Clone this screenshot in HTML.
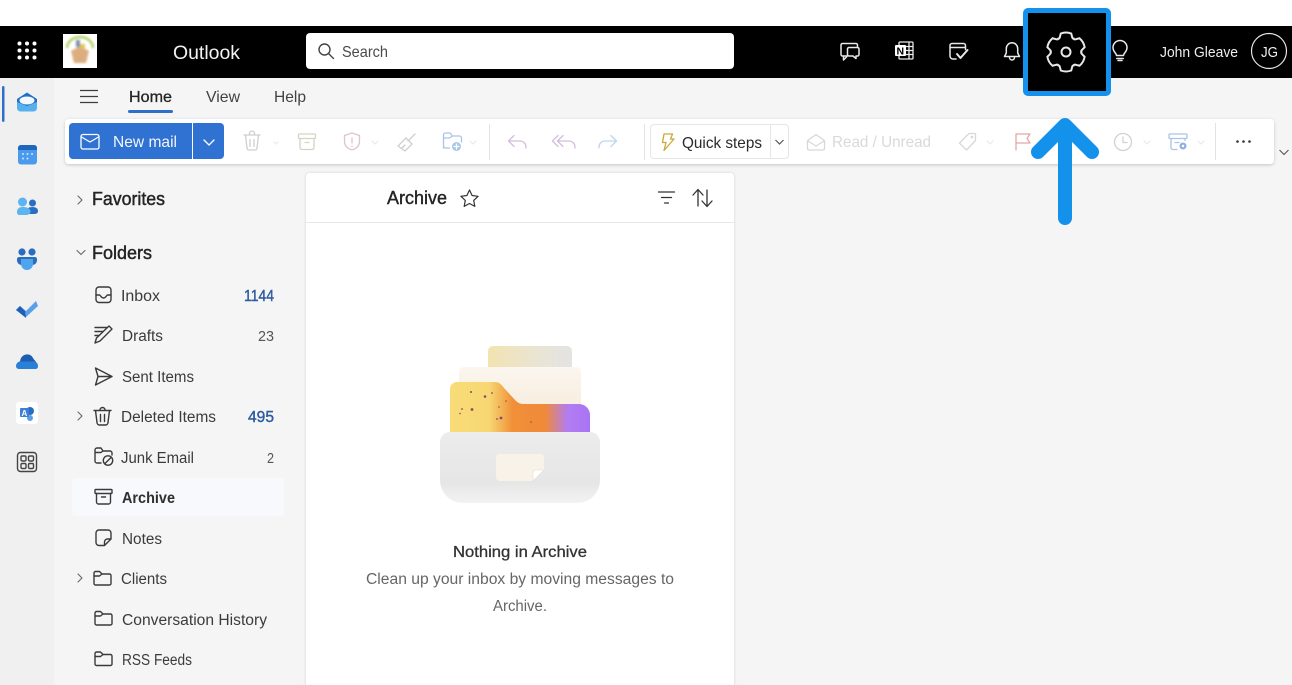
<!DOCTYPE html>
<html lang="en">
<head>
<meta charset="utf-8">
<title>Outlook</title>
<style>
html,body{margin:0;padding:0;width:1292px;height:685px;overflow:hidden;background:#fff}
svg{display:block;font-family:"Liberation Sans",sans-serif;filter:blur(.3px)}
.ln{fill:none;stroke:#3a3a3a;stroke-width:1.4;stroke-linecap:round;stroke-linejoin:round}
.nav{font-size:15.5px;fill:#3b3b3b}
.head{font-size:18px;fill:#242424;stroke:#242424;stroke-width:.45}
.cnt{font-size:15px;fill:#555}
.blue{font-size:15.5px;fill:#2c5c9f;stroke:#2c5c9f;stroke-width:.4}
</style>
</head>
<body>
<svg width="1292" height="685" viewBox="0 0 1292 685" xmlns="http://www.w3.org/2000/svg">
<defs>
<filter id="sh" x="-2%" y="-20%" width="104%" height="150%"><feDropShadow dx="0" dy="1" stdDeviation="1.5" flood-color="#000" flood-opacity=".2"/></filter>
<filter id="sh2" x="-5%" y="-5%" width="110%" height="110%"><feDropShadow dx="0" dy="0" stdDeviation="1.2" flood-color="#000" flood-opacity=".16"/></filter>
<filter id="blur1"><feGaussianBlur stdDeviation="1"/></filter>
<linearGradient id="fold" x1="0" x2="1" y1="0" y2="0"><stop offset="0" stop-color="#f8dc78"/><stop offset=".28" stop-color="#f7d772"/><stop offset=".45" stop-color="#f18f38"/><stop offset=".68" stop-color="#f08a3a"/><stop offset=".84" stop-color="#b27cf2"/><stop offset="1" stop-color="#a974f2"/></linearGradient>
<linearGradient id="tab" x1="0" x2="1" y1="0" y2="0"><stop offset="0" stop-color="#f3e3b2"/><stop offset=".6" stop-color="#e9e4d4"/><stop offset="1" stop-color="#e3e3e3"/></linearGradient>
<linearGradient id="paper" x1="0" x2="0" y1="0" y2="1"><stop offset="0" stop-color="#fbf6ef"/><stop offset="1" stop-color="#f6ead9"/></linearGradient>
<linearGradient id="drawer" x1="0" x2="0" y1="0" y2="1"><stop offset="0" stop-color="#ececec"/><stop offset=".72" stop-color="#e6e6e6"/><stop offset="1" stop-color="#f3f3f3"/></linearGradient>
<path id="gs" d="M-7.750-13.400Q-6.500-13-6-15.500L-5.200-18.500Q0-20.500 5.200-18.500L6-15.500Q6.500-13 7.750-13.400"/>
<g id="fld"><path d="M1 2.500a1.500 1.500 0 0 1 1.500-1.500h4l2.500 2.500h7.500a1.500 1.500 0 0 1 1.500 1.500v8a1.500 1.500 0 0 1-1.500 1.500H2.500A1.500 1.500 0 0 1 1 13z"/><path d="M1 5.500h5.500L9 3.500"/></g>
</defs>

<!-- backgrounds -->
<rect width="1292" height="685" fill="#f5f5f5"/>
<rect y="78" width="54" height="607" fill="#f0f0f0"/>
<rect width="1292" height="26" fill="#fff"/>
<rect y="26" width="1292" height="52" fill="#000"/>

<!-- header -->
<g fill="#fff">
<circle cx="19.500" cy="43.500" r="2"/><circle cx="27" cy="43.500" r="2"/><circle cx="34.500" cy="43.500" r="2"/>
<circle cx="19.500" cy="50.500" r="2"/><circle cx="27" cy="50.500" r="2"/><circle cx="34.500" cy="50.500" r="2"/>
<circle cx="19.500" cy="57.500" r="2"/><circle cx="27" cy="57.500" r="2"/><circle cx="34.500" cy="57.500" r="2"/>
</g>
<rect x="63" y="34" width="34" height="34" fill="#fff"/>
<g filter="url(#blur1)">
<path d="M67 48a13 11 0 0 1 26 0" fill="none" stroke="#b7cf6a" stroke-width="2.600"/>
<path d="M71 51l9-5 9 5-3 12h-12z" fill="#dcae7f"/>
<rect x="76" y="40" width="4" height="7" fill="#7691ad"/><rect x="80" y="44" width="5" height="4" fill="#e0c84f"/>
</g>
<text x="173" y="59" font-size="19" fill="#f3f3f3" textLength="67" lengthAdjust="spacingAndGlyphs">Outlook</text>
<rect x="306" y="33" width="428" height="36" rx="4" fill="#fff"/>
<g fill="none" stroke="#444" stroke-width="1.400" stroke-linecap="round"><circle cx="324.500" cy="49.500" r="5.500"/><path d="M328.500 53.500l5 5"/></g>
<text x="342" y="57" font-size="16" fill="#4a4a4a" textLength="46" lengthAdjust="spacingAndGlyphs">Search</text>

<g fill="none" stroke="#e9e9e9" stroke-width="1.500" stroke-linecap="round" stroke-linejoin="round">
<!-- chat -->
<path d="M847 56h-4.500a1.500 1.500 0 0 1-1.500-1.500V45a1.500 1.500 0 0 1 1.500-1.500H856a1.500 1.500 0 0 1 1.500 1.500v2"/>
<path d="M843.500 56v4l3.500-3.500"/>
<path d="M849 47.500h8.500a1.500 1.500 0 0 1 1.500 1.500v5.500a1.500 1.500 0 0 1-1.500 1.500H856v2.500l-3-2.500h-4a1.500 1.500 0 0 1-1.500-1.500V49a1.500 1.500 0 0 1 1.500-1.500z"/>
<!-- todo -->
<path d="M950 56V45.500a2 2 0 0 1 2-2h11.500a2 2 0 0 1 2 2v4M950 47.500h15.500M950 56a3 3 0 0 0 3 3h3"/>
<path d="M957 54l3.500 4 7-8" stroke-width="2"/>
<!-- bell -->
<path d="M1004.500 56.500h15l-1.800-3.500v-4.500a5.700 5.700 0 0 0-11.400 0V53z"/><path d="M1009.500 57.500a2.500 2.500 0 0 0 5 0"/>
<!-- bulb -->
<path d="M1116.500 55.500c0-2.500-3.500-3.500-3.500-8a7 7 0 0 1 14 0c0 4.500-3.500 5.500-3.500 8z"/><path d="M1116.800 58.500h6.400M1118 60.500h4"/>
</g>
<!-- onenote -->
<g fill="none" stroke="#e9e9e9" stroke-width="1.300"><rect x="899" y="42" width="14" height="17" rx="1"/><path d="M905 46.500h8M905 50.500h8M905 54.500h8M909 42v17"/></g>
<rect x="895" y="45" width="11" height="11" rx="1" fill="#fff"/>
<text x="896.500" y="54.500" font-size="10.500" font-weight="bold" fill="#000">N</text>

<text x="1160" y="57" font-size="14.500" fill="#eee" textLength="78" lengthAdjust="spacingAndGlyphs">John Gleave</text>
<circle cx="1269" cy="51" r="17.500" fill="none" stroke="#e6e6e6" stroke-width="1.200"/>
<text x="1261" y="57" font-size="15" fill="#eee" textLength="17" lengthAdjust="spacingAndGlyphs">JG</text>

<!-- tabs -->
<path d="M80 90.500h18M80 96.500h18M80 102.500h18" stroke="#3d3d3d" stroke-width="1.300" fill="none"/>
<text x="129" y="102" font-size="16" fill="#242424" stroke="#242424" stroke-width=".3" textLength="43" lengthAdjust="spacingAndGlyphs">Home</text>
<rect x="128" y="110" width="45" height="3" rx="1.500" fill="#2f6fc9"/>
<text x="206" y="102" font-size="16" fill="#424242" textLength="34" lengthAdjust="spacingAndGlyphs">View</text>
<text x="274" y="102" font-size="16" fill="#424242" textLength="32" lengthAdjust="spacingAndGlyphs">Help</text>

<!-- ribbon -->
<rect x="65" y="119" width="1209" height="45" rx="4" fill="#fff" filter="url(#sh)"/>
<path d="M69 127a4 4 0 0 1 4-4h119v36H73a4 4 0 0 1-4-4z" fill="#2f72d2"/>
<path d="M193 123h27a4 4 0 0 1 4 4v28a4 4 0 0 1-4 4h-27z" fill="#2f72d2"/>
<g fill="none" stroke="#fff" stroke-width="1.300" stroke-linejoin="round" stroke-linecap="round">
<rect x="81" y="134.500" width="18" height="14.500" rx="2"/><path d="M81.500 137l8.500 5 8.500-5"/>
<path d="M204 140l5 5 5-5"/>
</g>
<text x="113" y="147" font-size="16" fill="#f2f6fc" textLength="64" lengthAdjust="spacingAndGlyphs">New mail</text>

<g fill="none" stroke-width="1.300" stroke-linecap="round" stroke-linejoin="round">
<!-- trash -->
<g stroke="#cfcfcf"><path d="M244 135h16M249.500 135v-1.500a2.500 2.500 0 0 1 5 0V135M245.500 135l1.500 13a2 2 0 0 0 2 2h6a2 2 0 0 0 2-2l1.500-13M250 139.500v7M254 139.500v7"/>
<path d="M274 142l2 2 2-2" stroke="#eee"/></g>
<!-- archive -->
<g stroke="#d5d3c4"><rect x="298.500" y="134" width="17" height="4.500" rx="1"/><path d="M300 138.500v9a2 2 0 0 0 2 2h10a2 2 0 0 0 2-2v-9M305 142.500h4"/></g>
<!-- shield -->
<g stroke="#e2c3c7"><path d="M352 133l7.500 2.500v6c0 4-3 7-7.500 8.500-4.500-1.500-7.500-4.500-7.500-8.500v-6z"/><path d="M352 138v5M352 146v.5"/></g>
<path d="M372 141l3 3 3-3M470 141l3 3 3-3" stroke="#ececec"/>
<!-- broom -->
<g stroke="#cfcfcf"><path d="M415 134l-7 7M398 146l8-8 6 6-7 7z"/><path d="M402 148l3-3"/></g>
<!-- move -->
<g stroke="#a9c4e6"><path d="M443.500 148v-13a2 2 0 0 1 2-2h4.500l2.500 3h7a2 2 0 0 1 2 2v4M443.500 138h6l3-2M443.500 146a2 2 0 0 0 2 2h4"/></g>
<circle cx="456.500" cy="146.500" r="4.500" fill="#a9c4ec"/><path d="M454 146.500h5M456.500 144v5" stroke="#fff"/>
<!-- undo etc -->
<g stroke="#d4bddc"><path d="M509 141h11a6 6 0 0 1 6 6v1M514 135.500l-5.500 5.500 5.500 5.500"/>
<path d="M558 141h11a6 6 0 0 1 6 6v1M563 135.500l-5.500 5.500 5.500 5.500M558 135.500l-5.500 5.500 5.500 5.500"/></g>
<g stroke="#bfd4ee"><path d="M616 141h-11a6 6 0 0 0-6 6v1M611 135.500l5.500 5.500-5.500 5.500"/></g>
<!-- right group -->
<g stroke="#d8d8d8"><path d="M807.500 140.500l8.500-6 8.500 6v8a1.500 1.500 0 0 1-1.500 1.500h-14a1.500 1.500 0 0 1-1.500-1.500zM808 141l8 5 8-5"/></g>
<g stroke="#d8d8d8"><path d="M969 133.500h6.500v7l-9 9.500-7-7z"/><circle cx="972" cy="137" r=".7"/><path d="M987 141l3 3 3-3M1144 141l3 3 3-3M1198 141l3 3 3-3" stroke="#ececec"/></g>
<g stroke="#dfa9a5"><path d="M1016 150v-16h14l-3 4.500 3 4.500h-14"/></g>
<g stroke="#d2d2d2"><circle cx="1123" cy="142" r="8.500"/><path d="M1123 137v5.500h4"/></g>
<g stroke="#a9c4e6"><rect x="1169" y="134" width="18" height="4.500" rx="1"/><path d="M1171 138.500v9a2 2 0 0 0 2 2h4M1185 138.500v2M1175 142.500h4"/></g>
<circle cx="1183" cy="146" r="3.500" fill="#8fb1e2"/><circle cx="1183" cy="146" r="1.200" fill="#fff"/>
</g>
<path d="M489.500 124v36M644.500 124v36M1215.500 123v37" stroke="#e3e3e3" stroke-width="1"/>
<g fill="#333"><circle cx="1237.500" cy="141.500" r="1.300"/><circle cx="1243.500" cy="141.500" r="1.300"/><circle cx="1249.500" cy="141.500" r="1.300"/></g>
<path d="M1279.500 150l4.500 4.500 4.500-4.500" fill="none" stroke="#555" stroke-width="1.100"/>

<rect x="650.500" y="124.500" width="138" height="34" rx="3.500" fill="#fff" stroke="#e6e6e6"/>
<path d="M770.500 125v33" stroke="#e6e6e6"/>
<path d="M664 134h8.500l-2 5h3.500l-10 11.500 2-8h-3.500z" fill="none" stroke="#c9a83a" stroke-width="1.300" stroke-linejoin="round"/>
<text x="682" y="148" font-size="16" fill="#2a2a2a" textLength="80" lengthAdjust="spacingAndGlyphs">Quick steps</text>
<path d="M775.500 140l4 4 4-4" fill="none" stroke="#555" stroke-width="1.200"/>
<text x="832" y="147" font-size="16" fill="#d9d9d9" textLength="99" lengthAdjust="spacingAndGlyphs">Read / Unread</text>

<!-- rail -->
<rect x="2" y="86" width="2.500" height="36" rx="1.200" fill="#2f6fc9"/>
<path d="M17 99l10-6.500 10 6.500v8a4 4 0 0 1-4 4H21a4 4 0 0 1-4-4z" fill="#1f6fc9"/>
<ellipse cx="27" cy="100.500" rx="7.500" ry="4" fill="#f2f8fe"/>
<path d="M17 102l10 4 10-4v6a3.500 3.500 0 0 1-3.500 3.500h-13A3.500 3.500 0 0 1 17 108z" fill="#58b0ef"/>
<rect x="18" y="145" width="19" height="19.500" rx="3" fill="#4a9bee"/>
<path d="M18 150v-2a3 3 0 0 1 3-3h13a3 3 0 0 1 3 3v2z" fill="#1f66bd"/>
<g fill="#cfe6fb"><circle cx="23" cy="154" r="1"/><circle cx="27.500" cy="154" r="1"/><circle cx="32" cy="154" r="1"/><circle cx="23" cy="158.500" r="1"/><circle cx="27.500" cy="158.500" r="1"/></g>
<circle cx="32.500" cy="203" r="3.500" fill="#2a6fbf"/><path d="M26 212c0-3.500 3-5 6.500-5s5.500 1.500 5.500 4c0 2-1.500 3-4 3h-6z" fill="#2a6fbf"/>
<circle cx="22.500" cy="202" r="4.500" fill="#5cb4f0"/><path d="M17 212c0-3.500 2.500-5 5.500-5 4 0 8 1 8 4.500 0 2-2 3.500-4 3.500h-7c-1.500 0-2.500-1-2.500-3z" fill="#5cb4f0"/>
<circle cx="22" cy="252" r="3.600" fill="#2a6cc0"/><circle cx="32" cy="252" r="3.600" fill="#2a6cc0"/>
<path d="M17 259c0-1 1-2 2-2h16c1 0 2 1 2 2v1c0 3-2 5-5 5h-10c-3 0-5-2-5-5z" fill="#2a6cc0"/>
<path d="M21 259h12v5a6 6 0 0 1-12 0z" fill="#4fa4ee"/>
<path d="M16 310l4-4 6 5 10-10 2 5-12 11z" fill="#5a9fea"/><path d="M16 310l4-4 5 5 1 7z" fill="#1f5fb8"/>
<path d="M16 366c0-3 3-5 6-5h11c3 0 5 2.500 5 5 0 2-1 3-3 3H19c-2 0-3-1.500-3-3z" fill="#2a7fd6"/>
<path d="M20 361.500C21 353 31 352 33.500 359l2.500 2.500H20z" fill="#1c5fae"/>
<rect x="16" y="402" width="22" height="22" rx="3" fill="#fff"/>
<circle cx="30" cy="411" r="4" fill="#2a6cc0"/><circle cx="30" cy="418" r="3" fill="#5b9ee8"/>
<rect x="20" y="408" width="9" height="9" rx="1" fill="#3d7fd4"/><text x="21.500" y="416" font-size="8" font-weight="bold" fill="#fff">A</text>
<g fill="none" stroke="#444" stroke-width="1.400"><rect x="17.500" y="452.500" width="19" height="19" rx="3"/><rect x="21" y="456" width="5" height="5" rx="1.200"/><rect x="28.500" y="456" width="5" height="5" rx="1.200"/><rect x="21" y="463.500" width="5" height="5" rx="1.200"/><rect x="28.500" y="463.500" width="5" height="5" rx="1.200"/></g>

<!-- folders -->
<rect x="72" y="478" width="212" height="38" rx="4" fill="#f7f9fc"/>
<g fill="none" stroke="#666" stroke-width="1.100" stroke-linecap="round" stroke-linejoin="round">
<path d="M78 196l4 4-4 4M77 250.500l4 4 4-4M78 412l4 4-4 4M78 574l4 4-4 4"/>
</g>
<text x="92" y="205" class="head" textLength="73" lengthAdjust="spacingAndGlyphs">Favorites</text>
<text x="92" y="259" class="head" textLength="60" lengthAdjust="spacingAndGlyphs">Folders</text>

<g class="ln">
<!-- inbox -->
<rect x="96" y="287" width="15" height="15.500" rx="3"/><path d="M96 295h3.500c1 0 1.500 3 4 3s3-3 4-3h3.500"/>
<!-- drafts -->
<path d="M95 327.500h12M95 331.500h8M95 335.500h4"/><path d="M109 326l3 3-12 12-5 2 1.500-5z"/>
<!-- sent -->
<path d="M95.500 368l16.500 8.500-16.500 8.500 2.500-8.500zM98 376.500h14"/>
<!-- deleted -->
<path d="M94 410.500h17M100 410.500V410a2.500 2.500 0 0 1 5 0v.5M95.500 410.500l1.500 12a2.500 2.500 0 0 0 2.500 2.500h6a2.500 2.500 0 0 0 2.500-2.500l1.500-12M100.500 414.500v7M104.500 414.500v7"/>
<!-- junk -->
<path d="M95 461v-11a2 2 0 0 1 2-2h4l2 3h7a2 2 0 0 1 2 2v2M95 452.500h6l2-1.500M95 461a2 2 0 0 0 2 2h4"/>
<circle cx="108" cy="460.500" r="4.700"/><path d="M105 463.500l6-6"/>
<!-- archive -->
<rect x="95" y="489.500" width="17" height="4" rx=".8"/><path d="M96.500 493.500v8.500a2 2 0 0 0 2 2h10a2 2 0 0 0 2-2v-8.500M101.500 497h4"/>
<!-- notes -->
<path d="M99 530h9a3 3 0 0 1 3 3v6l-6.500 6.500H99a3 3 0 0 1-3-3V533a3 3 0 0 1 3-3zM111 539h-3.500a3 3 0 0 0-3 3v3.500"/>
<use href="#fld" x="93" y="570.500"/>
<use href="#fld" x="94" y="610.500"/>
<use href="#fld" x="94" y="651"/>
</g>

<text x="121" y="301" class="nav" textLength="39" lengthAdjust="spacingAndGlyphs">Inbox</text>
<text x="122" y="341" class="nav" textLength="41" lengthAdjust="spacingAndGlyphs">Drafts</text>
<text x="122" y="382" class="nav" textLength="72" lengthAdjust="spacingAndGlyphs">Sent Items</text>
<text x="121" y="422" class="nav" textLength="95" lengthAdjust="spacingAndGlyphs">Deleted Items</text>
<text x="121" y="463" class="nav" textLength="73" lengthAdjust="spacingAndGlyphs">Junk Email</text>
<text x="122" y="503" class="nav" font-weight="bold" style="fill:#2f2f2f" textLength="53" lengthAdjust="spacingAndGlyphs">Archive</text>
<text x="122" y="544" class="nav" textLength="40" lengthAdjust="spacingAndGlyphs">Notes</text>
<text x="121" y="584" class="nav" textLength="46" lengthAdjust="spacingAndGlyphs">Clients</text>
<text x="122" y="625" class="nav" textLength="145" lengthAdjust="spacingAndGlyphs">Conversation History</text>
<text x="122" y="665" class="nav" textLength="70" lengthAdjust="spacingAndGlyphs">RSS Feeds</text>
<text x="244" y="301" class="blue" textLength="30" lengthAdjust="spacingAndGlyphs">1144</text>
<text x="258" y="341" class="cnt" textLength="16" lengthAdjust="spacingAndGlyphs">23</text>
<text x="248" y="422" class="blue" textLength="26" lengthAdjust="spacingAndGlyphs">495</text>
<text x="267" y="463" class="cnt" textLength="7" lengthAdjust="spacingAndGlyphs">2</text>

<!-- list panel -->
<path d="M306 177a4 4 0 0 1 4-4h420a4 4 0 0 1 4 4v508H306z" fill="#fff" filter="url(#sh2)"/>
<path d="M306 222.500h428" stroke="#e8e8e8"/>
<text x="387" y="204" font-size="18" fill="#242424" stroke="#242424" stroke-width=".4" textLength="60" lengthAdjust="spacingAndGlyphs">Archive</text>
<path d="M469.500 190l2.600 5.500 6 .8-4.400 4.100 1.100 6-5.300-2.900-5.300 2.900 1.100-6-4.400-4.100 6-.8z" fill="none" stroke="#333" stroke-width="1.200" stroke-linejoin="round"/>
<path d="M658.500 192h16M661.500 197.500h10M664.500 203h4" stroke="#333" stroke-width="1.300" stroke-linecap="round"/>
<path d="M698 206v-16M693 195l5-5.500 5 5.500M707 190v16M702 201l5 5.500 5-5.500" fill="none" stroke="#333" stroke-width="1.300" stroke-linecap="round" stroke-linejoin="round"/>

<!-- illustration -->
<rect x="488" y="346" width="84" height="30" rx="5" fill="url(#tab)"/>
<path d="M459 372a5 5 0 0 1 5-5h112a5 5 0 0 1 5 5v50H459z" fill="url(#paper)"/>
<path d="M450 389a7 7 0 0 1 7-7h38c4 0 6 2 9 6l11 12c3 3 5 4 9 4h55a11 11 0 0 1 11 11V432H450z" fill="url(#fold)"/>
<g fill="#8a4a6a"><circle cx="471" cy="392" r="1"/><circle cx="485" cy="396.500" r="1.300"/><circle cx="492" cy="393" r=".9"/><circle cx="462" cy="409" r=".9"/><circle cx="472" cy="409.500" r="1.400"/><circle cx="460" cy="413.500" r=".8"/><circle cx="499" cy="407" r=".8"/><circle cx="501" cy="418" r="1.400"/><circle cx="497" cy="419" r=".9"/><circle cx="531" cy="422" r=".8"/><circle cx="506" cy="401" r=".8"/></g>
<path d="M440 442a10 10 0 0 1 10-10h140a10 10 0 0 1 10 10v38a23 23 0 0 1-23 23H463a23 23 0 0 1-23-23z" fill="url(#drawer)"/>
<path d="M500 454h40a4 4 0 0 1 4 4v12l-11 11h-33a4 4 0 0 1-4-4v-19a4 4 0 0 1 4-4z" fill="#f8f2e9"/>
<path d="M544 470h-8a3 3 0 0 0-3 3v8z" fill="#fff" stroke="#e4ddd0" stroke-width=".6"/>

<text x="453" y="557" font-size="15.500" fill="#333" stroke="#333" stroke-width=".3" textLength="134" lengthAdjust="spacingAndGlyphs">Nothing in Archive</text>
<text x="366" y="584" font-size="15.500" fill="#666" textLength="308" lengthAdjust="spacingAndGlyphs">Clean up your inbox by moving messages to</text>
<text x="493" y="611" font-size="15.500" fill="#666" textLength="54" lengthAdjust="spacingAndGlyphs">Archive.</text>

<!-- annotation -->
<rect x="1025.500" y="10.500" width="83" height="83" rx="2.500" fill="#000" stroke="#1391eb" stroke-width="5"/>
<g transform="translate(1066 52)" fill="none" stroke="#e8e8e8" stroke-width="2" stroke-linecap="round">
<use href="#gs"/><use href="#gs" transform="rotate(60)"/><use href="#gs" transform="rotate(120)"/><use href="#gs" transform="rotate(180)"/><use href="#gs" transform="rotate(240)"/><use href="#gs" transform="rotate(300)"/>
<circle r="4.500"/>
</g>
<path d="M1065 218V125M1038 152l27-27 27 27" fill="none" stroke="#1391eb" stroke-width="14" stroke-linecap="round" stroke-linejoin="round"/>
</svg>
</body>
</html>
